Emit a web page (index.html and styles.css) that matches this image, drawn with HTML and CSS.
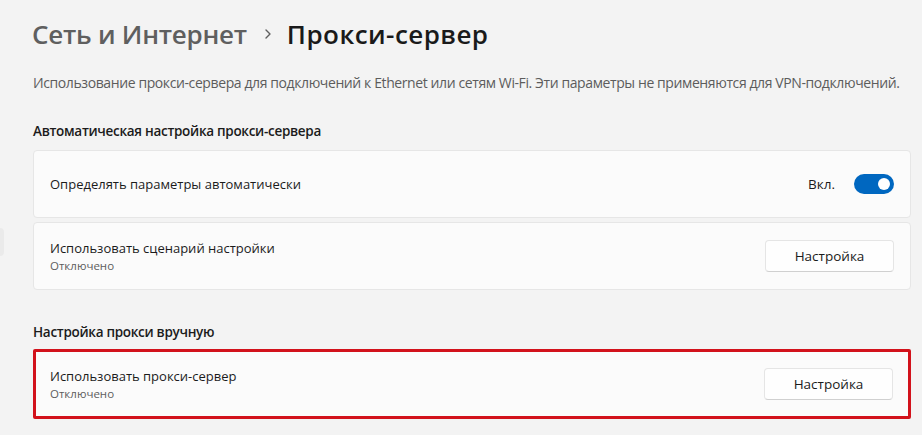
FILE: index.html
```
<!DOCTYPE html>
<html lang="ru">
<head>
<meta charset="utf-8">
<title>Прокси-сервер</title>
<link rel="stylesheet" href="styles.css">
</head>
<body>
<div class="nav-peek"></div>
<main class="page">
  <h1 class="crumbs">
    <span class="crumb-parent">Сеть и Интернет</span>
    <svg class="crumb-sep" width="10" height="12" viewBox="0 0 10 12"><path d="M3 2 L7 6 L3 10" fill="none" stroke="#5f5f5f" stroke-width="1.4" stroke-linecap="round" stroke-linejoin="round"/></svg>
    <span class="crumb-current">Прокси-сервер</span>
  </h1>
  <p class="desc">Использование прокси-сервера для подключений к Ethernet или сетям Wi-Fi. Эти параметры не применяются для VPN-подключений.</p>

  <h2 class="section-title">Автоматическая настройка прокси-сервера</h2>
  <div class="cards">
    <div class="card">
      <div class="card-text"><div class="card-label">Определять параметры автоматически</div></div>
      <div class="card-control">
        <span class="toggle-state">Вкл.</span>
        <span class="toggle on"><span class="knob"></span></span>
      </div>
    </div>
    <div class="card">
      <div class="card-text">
        <div class="card-label">Использовать сценарий настройки</div>
        <div class="card-sub">Отключено</div>
      </div>
      <button class="btn">Настройка</button>
    </div>
  </div>

  <h2 class="section-title section-gap">Настройка прокси вручную</h2>
  <div class="card card-marked">
    <div class="card-text">
      <div class="card-label">Использовать прокси-сервер</div>
      <div class="card-sub">Отключено</div>
    </div>
    <button class="btn">Настройка</button>
  </div>
</main>
</body>
</html>
```
FILE: styles.css
```
* { box-sizing: border-box; }
html, body { margin: 0; padding: 0; }
body {
  background: #f3f3f3;
  font-family: "Open Sans", "Noto Sans", sans-serif;
  color: #1b1b1b;
  width: 922px;
  height: 435px;
  overflow: hidden;
  position: relative;
}
/* edge of the selected navigation item, just visible at the window's left */
.nav-peek {
  position: absolute;
  left: -4px;
  top: 228px;
  width: 8px;
  height: 28px;
  border-radius: 4px;
  background: #eaeaea;
}
.page {
  padding: 16px 11px 0 33px;
}
.crumbs {
  margin: 0 0 0 -1px;
  display: flex;
  align-items: center;
  font-size: 26px;
  font-weight: 600;
  line-height: 36px;
  letter-spacing: -0.25px;
}
.crumb-parent { color: #5f5f5f; }
.crumb-sep { margin: 0 14px 0 16px; }
.crumb-current { color: #1a1a1a; letter-spacing: 0.45px; }
.desc {
  margin: 22px 0 0;
  font-size: 14px;
  line-height: 18px;
  color: #5c5c5c;
  letter-spacing: -0.4px;
}
.section-title {
  margin: 30px 0 0;
  font-size: 13.5px;
  font-weight: 600;
  line-height: 18px;
  color: #1b1b1b;
  letter-spacing: -0.3px;
}
.section-gap { margin-top: 33px; }
.cards {
  margin-top: 10px;
  display: flex;
  flex-direction: column;
  gap: 4px;
}
.card {
  height: 68px;
  background: #fbfbfb;
  border: 1px solid #e6e6e6;
  border-radius: 4px;
  display: flex;
  align-items: center;
  justify-content: space-between;
  padding: 0 16px 0 16px;
}
.card-text { display: flex; flex-direction: column; }
.card-label {
  font-size: 13px;
  line-height: 19px;
  color: #1b1b1b;
}
.card-sub {
  font-size: 11.5px;
  line-height: 16px;
  color: #5d5d5d;
}
.card-control {
  display: flex;
  align-items: center;
  gap: 19px;
}
.toggle-state {
  font-size: 13.5px;
  color: #1b1b1b;
}
.toggle {
  width: 40px;
  height: 20px;
  border-radius: 10px;
  background: #0067c0;
  display: flex;
  align-items: center;
  justify-content: flex-end;
  padding-right: 4px;
}
.knob {
  width: 12px;
  height: 12px;
  border-radius: 50%;
  background: #ffffff;
}
.btn {
  width: 129px;
  height: 32px;
  background: #fefefe;
  border: 1px solid #e5e5e5;
  border-bottom-color: #d0d0d0;
  border-radius: 4px;
  font-family: inherit;
  font-size: 13.5px;
  color: #1b1b1b;
  padding: 0;
}
.card-marked {
  margin-top: 8px;
  height: 70px;
  border: 3px solid #d2121b;
  border-radius: 2px;
  padding: 0 15px 0 14px;
}
```
